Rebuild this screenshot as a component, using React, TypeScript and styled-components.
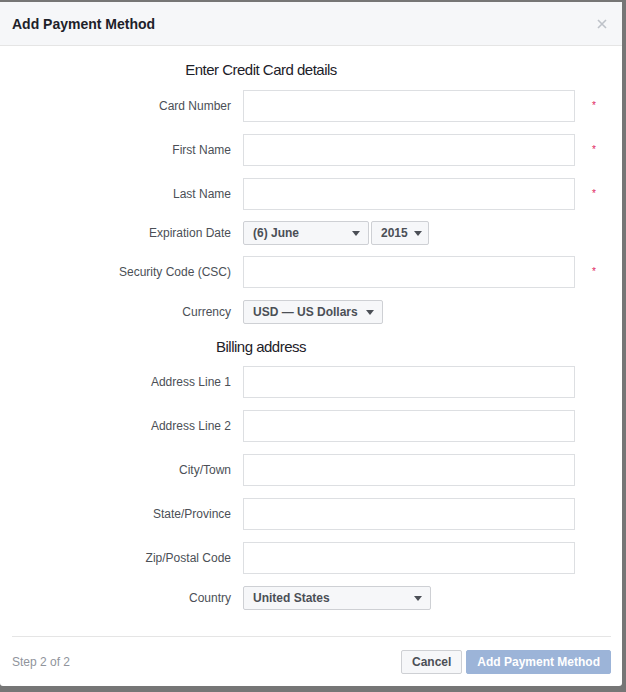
import React from "react";
import styled, { createGlobalStyle } from "styled-components";

const Global = createGlobalStyle`
  html, body { margin: 0; padding: 0; }
  body {
    background: #767676;
    font-family: "Liberation Sans", Arial, sans-serif;
    width: 626px;
    height: 692px;
    overflow: hidden;
  }
`;

const Dialog = styled.div`
  margin-top: 2px;
  width: 622px;
  height: 684px;
  background: #fff;
  border-radius: 0 0 3px 3px;
  display: flex;
  flex-direction: column;
  overflow: hidden;
`;

const Header = styled.div`
  height: 43px;
  background: #f6f7f9;
  border-bottom: 1px solid #e5e5e5;
  display: flex;
  align-items: center;
  justify-content: space-between;
  padding: 0 12px;
`;

const Title = styled.div`
  font-size: 14px;
  font-weight: bold;
  color: #1d2129;
`;

const Close = styled.button`
  border: 0;
  background: none;
  padding: 0;
  width: 12px;
  height: 12px;
  display: flex;
  align-items: center;
  justify-content: center;
  margin-right: 2px;
`;

const Body = styled.div`
  flex: 1;
  padding-top: 14px;
  display: flex;
  flex-direction: column;
`;

const SectionTitle = styled.div<{ $mt?: number; $mb?: number }>`
  width: 522px;
  text-align: center;
  font-size: 15px;
  letter-spacing: -0.5px;
  line-height: 20px;
  color: #1d2129;
  margin-top: ${(p) => p.$mt ?? 0}px;
  margin-bottom: ${(p) => p.$mb ?? 0}px;
`;

const Rows = styled.div`
  display: flex;
  flex-direction: column;
  gap: 12px;
`;

const Row = styled.div<{ $shift?: number }>`
  display: grid;
  grid-template-columns: 231px 332px 30px;
  column-gap: 12px;
  align-items: center;
  margin-top: ${(p) => p.$shift ?? 0}px;
`;

const Label = styled.label`
  text-align: right;
  font-size: 12px;
  color: #4b4f56;
`;

const Input = styled.input`
  box-sizing: border-box;
  height: 32px;
  width: 332px;
  border: 1px solid #dddfe2;
  border-radius: 0;
  outline: none;
  padding: 0 8px;
  font-family: inherit;
  font-size: 12px;
`;

const Required = styled.span`
  color: #e0245e;
  font-size: 10px;
  padding-left: 5px;
  line-height: 1;
`;

const Selects = styled.div`
  display: flex;
  gap: 2px;
`;

const Select = styled.div<{ $w: number }>`
  box-sizing: border-box;
  width: ${(p) => p.$w}px;
  height: 24px;
  background: #f6f7f9;
  border: 1px solid #ced0d4;
  border-radius: 2px;
  display: flex;
  align-items: center;
  justify-content: space-between;
  padding: 0 8px 0 9px;
  font-size: 12px;
  font-weight: bold;
  color: #4b4f56;
`;

const Arrow = styled.span`
  width: 0;
  height: 0;
  border-left: 4.5px solid transparent;
  border-right: 4.5px solid transparent;
  border-top: 5px solid #4b4f56;
  margin-left: 6px;
  margin-top: 1px;
`;

const Footer = styled.div`
  margin: 0 11px 0 12px;
  border-top: 1px solid #e5e5e5;
  padding: 13px 0 12px;
  display: flex;
  align-items: center;
  justify-content: space-between;
`;

const Step = styled.div`
  font-size: 12px;
  color: #90949c;
`;

const Buttons = styled.div`
  display: flex;
  gap: 4px;
`;

const Button = styled.button<{ $primary?: boolean }>`
  box-sizing: border-box;
  height: 24px;
  padding: 0 10px;
  border-radius: 2px;
  font-family: inherit;
  font-size: 12px;
  font-weight: bold;
  border: 1px solid ${(p) => (p.$primary ? "#9cb4d8" : "#ced0d4")};
  background: ${(p) => (p.$primary ? "#9cb4d8" : "#f6f7f9")};
  color: ${(p) => (p.$primary ? "#fff" : "#4b4f56")};
`;

const TextRow = ({ label, req, shift }: { label: string; req?: boolean; shift?: number }) => (
  <Row $shift={shift}>
    <Label>{label}</Label>
    <Input />
    {req ? <Required>*</Required> : <span />}
  </Row>
);

const Sel = ({ w, value }: { w: number; value: string }) => (
  <Select $w={w}>
    <span>{value}</span>
    <Arrow />
  </Select>
);

export default function App() {
  return (
    <>
      <Global />
      <Dialog>
        <Header>
          <Title>Add Payment Method</Title>
          <Close aria-label="Close">
            <svg width="10" height="10" viewBox="0 0 10 10">
              <path d="M1 1 L9 9 M9 1 L1 9" stroke="#bec2c9" strokeWidth="1.6" />
            </svg>
          </Close>
        </Header>
        <Body>
          <SectionTitle $mb={10}>Enter Credit Card details</SectionTitle>
          <Rows>
            <TextRow label="Card Number" req />
            <TextRow label="First Name" req />
            <TextRow label="Last Name" req />
            <Row $shift={-1}>
              <Label>Expiration Date</Label>
              <Selects>
                <Sel w={126} value="(6) June" />
                <Sel w={58} value="2015" />
              </Selects>
              <span />
            </Row>
            <TextRow label="Security Code (CSC)" req shift={-1} />
            <Row>
              <Label>Currency</Label>
              <Selects>
                <Sel w={140} value="USD — US Dollars" />
              </Selects>
              <span />
            </Row>
          </Rows>
          <SectionTitle $mt={13} $mb={9}>Billing address</SectionTitle>
          <Rows>
            <TextRow label="Address Line 1" />
            <TextRow label="Address Line 2" />
            <TextRow label="City/Town" />
            <TextRow label="State/Province" />
            <TextRow label="Zip/Postal Code" />
            <Row>
              <Label>Country</Label>
              <Selects>
                <Sel w={188} value="United States" />
              </Selects>
              <span />
            </Row>
          </Rows>
        </Body>
        <Footer>
          <Step>Step 2 of 2</Step>
          <Buttons>
            <Button>Cancel</Button>
            <Button $primary>Add Payment Method</Button>
          </Buttons>
        </Footer>
      </Dialog>
    </>
  );
}
